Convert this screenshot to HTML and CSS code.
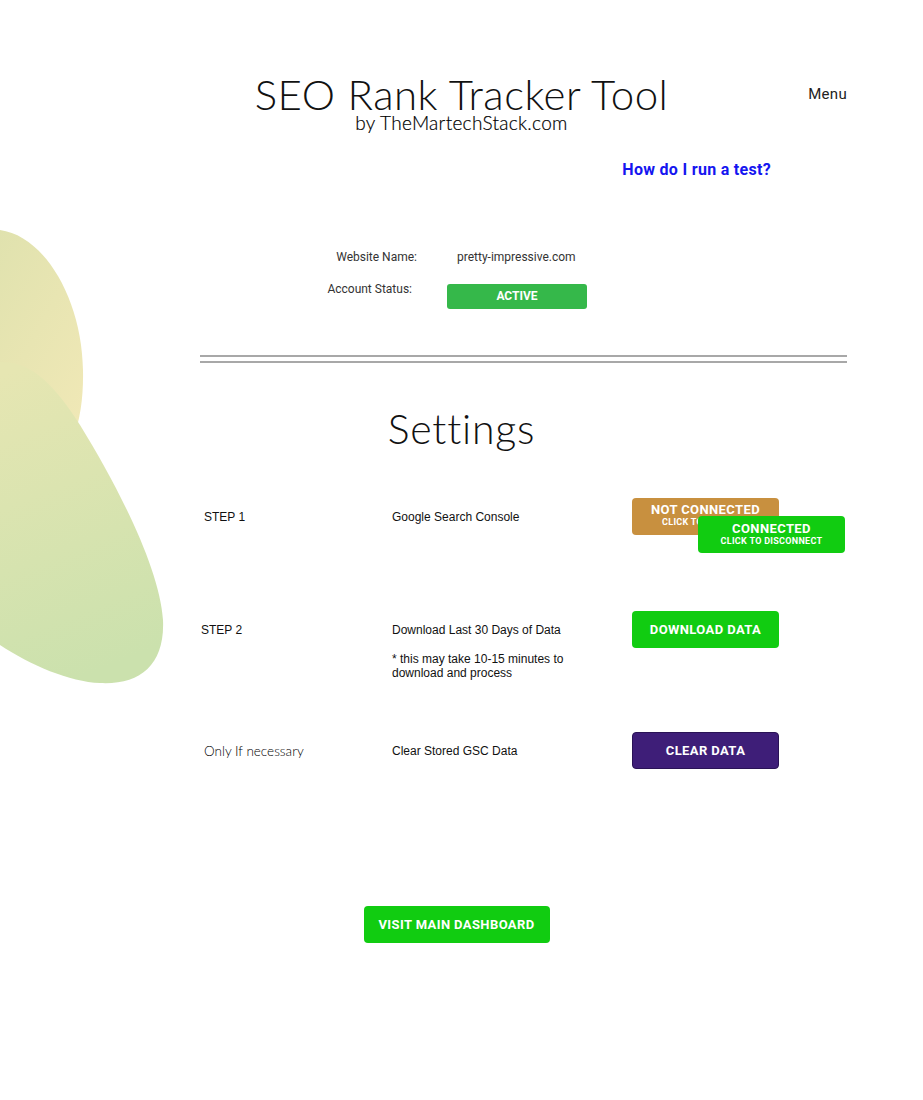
FILE: index.html
```html
<!DOCTYPE html>
<html lang="en">
<head>
  <meta charset="UTF-8">
  <title>SEO Rank Tracker Tool</title>
  <link rel="stylesheet" href="styles.css">
</head>
<body>
  <svg class="blob" width="180" height="480" viewBox="0 0 180 480">
    <defs>
      <linearGradient id="g1" x1="0" y1="0" x2="0.6" y2="1">
        <stop offset="0" stop-color="#e0e2ae"/>
        <stop offset="1" stop-color="#f0e8b6"/>
      </linearGradient>
      <linearGradient id="g2" x1="0.2" y1="0" x2="0.4" y2="1">
        <stop offset="0" stop-color="#e6e6b2"/>
        <stop offset="1" stop-color="#cbe1ad"/>
      </linearGradient>
    </defs>
    <path d="M0,10 C45,16 82,80 83,150 C84,200 72,240 40,260 L0,260 Z" fill="url(#g1)"/>
    <path d="M0,142 C30,140 55,165 80,205 C120,270 160,350 163,400 C165,445 140,465 100,463 C70,462 30,445 0,425 Z" fill="url(#g2)"/>
  </svg>

  <header class="header">
    <div></div>
    <div class="brand">
      <h1>SEO Rank Tracker Tool</h1>
      <div class="byline">by TheMartechStack.com</div>
    </div>
    <a href="#" class="menu">Menu</a>
  </header>

  <div class="page">
    <div class="help-row"><a href="#" class="help">How do I run a test?</a></div>

    <div class="account">
      <div class="acc-label">Website Name:</div>
      <div class="acc-value">pretty-impressive.com</div>
      <div class="acc-label acc-label-2">Account Status:</div>
      <div class="acc-status"><span class="status">ACTIVE</span></div>
    </div>

    <div class="divider"></div>

    <h2 class="settings-title">Settings</h2>

    <div class="step step-1">
      <div class="step-name">STEP 1</div>
      <div class="step-desc">Google Search Console</div>
      <div class="step-action">
        <div class="btn btn-orange">NOT CONNECTED<small>CLICK TO CONNECT</small></div>
        <div class="btn btn-green btn-over">CONNECTED<small>CLICK TO DISCONNECT</small></div>
      </div>
    </div>

    <div class="step step-2">
      <div class="step-name step-name-2">STEP 2</div>
      <div class="step-desc">
        Download Last 30 Days of Data
        <p class="note">* this may take 10-15 minutes to<br>download and process</p>
      </div>
      <div class="step-action"><div class="btn btn-green">DOWNLOAD DATA</div></div>
    </div>

    <div class="step step-3">
      <div class="step-name step-name-3">Only If necessary</div>
      <div class="step-desc">Clear Stored GSC Data</div>
      <div class="step-action"><div class="btn btn-purple">CLEAR DATA</div></div>
    </div>
  </div>

  <div class="footer">
    <a href="#" class="btn btn-green btn-wide">VISIT MAIN DASHBOARD</a>
  </div>
</body>
</html>
```

FILE: styles.css
```css
body { margin: 0; background: #fff; font-family: "Liberation Sans", Arial, sans-serif; color: #111; position: relative; min-height: 1100px; }
.blob { position: absolute; left: 0; top: 220px; z-index: 0; }

.header {
  display: grid;
  grid-template-columns: 1fr auto 1fr;
  align-items: start;
  padding-top: 74px;
  position: relative;
}
.brand { text-align: center; }
.brand h1 {
  margin: 0;
  font-family: Lato, sans-serif;
  font-weight: 300;
  font-size: 42px;
  line-height: 40px;
  letter-spacing: 0.5px;
  color: #111;
}
.byline { font-family: Lato, sans-serif; font-weight: 300; font-size: 19px; line-height: 20px; color: #000; margin-top: -1px; letter-spacing: 0.3px; -webkit-text-stroke: 0.2px #000; }
.menu {
  justify-self: end;
  margin-right: 76px;
  margin-top: 11px;
  font-family: Roboto, sans-serif;
  font-size: 15px;
  color: #222;
  text-decoration: none;
  letter-spacing: 0.3px;
}

.page { width: 647px; margin-left: 200px; position: relative; }
.help-row { display: flex; justify-content: flex-end; padding-right: 76px; margin-top: 27px; }
.help { font-family: Roboto, sans-serif; font-weight: 700; font-size: 16px; color: #1515f0; text-decoration: none; letter-spacing: 0.3px; }

.account {
  display: grid;
  grid-template-columns: 217px auto;
  column-gap: 40px;
  row-gap: 20px;
  margin-top: 71px;
  font-family: Roboto, sans-serif;
  font-size: 12px;
  color: #333;
  align-items: start;
}
.acc-label { text-align: right; }
.acc-label-2 { margin-right: 5px; margin-top: -2px; }
.acc-status { margin-left: -10px; }
.status {
  display: inline-block;
  width: 140px;
  height: 25px;
  line-height: 25px;
  background: #35b84a;
  color: #fff;
  font-weight: 700;
  text-align: center;
  border-radius: 3px;
}

.divider { margin-top: 46px; height: 4px; border-top: 2px solid #a8a8a8; border-bottom: 2px solid #a8a8a8; }

.settings-title {
  margin: 42px 0 0 -200px;
  width: 923px;
  text-align: center;
  font-family: Lato, sans-serif;
  font-weight: 300;
  font-size: 41px;
  line-height: 48px;
  color: #111;
  letter-spacing: 0.8px;
}

.step { display: grid; grid-template-columns: 192px 240px auto; align-items: start; font-size: 12px; color: #111; }
.step-name { padding-left: 4px; padding-top: 12px; }
.step-name-2 { padding-left: 1px; }
.step-name-3 { font-family: Lato, sans-serif; font-weight: 300; font-size: 13.5px; color: #000; padding-top: 11px; }
.step-desc { padding-top: 12px; }
.step-action { position: relative; }
.step-1 { margin-top: 45px; height: 113px; }
.step-2 { height: 121px; }
.note { margin: 15px 0 0; line-height: 14px; }

.btn {
  display: flex;
  flex-direction: column;
  align-items: center;
  justify-content: center;
  width: 147px;
  height: 37px;
  box-sizing: border-box;
  border-radius: 4px;
  color: #fff;
  font-family: Roboto, sans-serif;
  font-weight: 700;
  font-size: 13px;
  letter-spacing: 0.4px;
  text-decoration: none;
  line-height: 14px;
}
.btn small { font-size: 9px; line-height: 11px; letter-spacing: 0.3px; }
.btn-orange { background: #c8903f; padding-bottom: 2px; }
.btn-green { background: #11cc11; }
.btn-purple { background: #3e1e78; border: 1px solid #2a1356; }
.btn-over { position: absolute; left: 66px; top: 18px; }

.footer { display: flex; justify-content: center; margin-top: 137px; padding-right: 10px; }
.btn-wide { width: 186px; }
```
